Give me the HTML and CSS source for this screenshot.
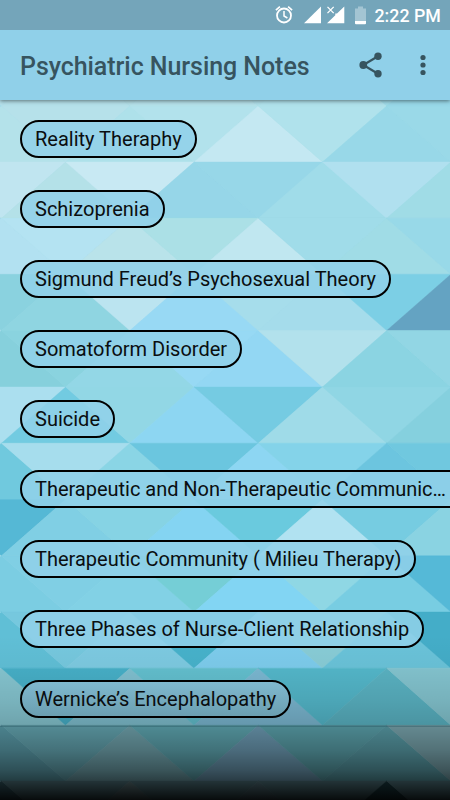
FILE: index.html
```
<!DOCTYPE html>
<html lang="en">
<head>
<meta charset="utf-8">
<title>Psychiatric Nursing Notes</title>
<link rel="stylesheet" href="styles.css">
</head>
<body>
<div class="screen">
  <svg class="backdrop" id="backdrop" viewBox="0 0 450 800" aria-hidden="true"></svg>
  <header class="top">
    <div class="status">
      <svg class="alarm" viewBox="0 0 18 20" fill="none" stroke="#fff"><circle cx="9" cy="10.5" r="7" stroke-width="1.8"/><path d="M9 6v5l3.4 2" stroke-width="1.5"/><path d="M.9 5.1 4.9 1.6M17.1 5.1l-4-3.5" stroke-width="1.7"/></svg>
      <svg class="signal" viewBox="0 0 17 18"><path d="M0 17.3 17 .6v16.7z" fill="#fff"/></svg>
      <svg class="signal nosim" viewBox="0 0 18 18"><path d="M0 17.3 8.3 9.2V7.6H10L17.3.6v16.7z" fill="#fff"/><path d="m.5.9 6.2 6.2M6.7.9.5 7.1" stroke="#fff" stroke-width="1.3"/></svg>
      <svg class="battery" viewBox="0 0 11 19"><path d="M3 .5h5v2h3V15H0V2.500h3z" fill="#a3c5d3"/><path d="M0 15h11v2.300q0 1-1 1H1q-1 0-1-1z" fill="#fff"/></svg>
      <span class="clock">2:22 PM</span>
    </div>
    <div class="bar">
      <h1 class="title">Psychiatric Nursing Notes</h1>
      <svg class="share" viewBox="0 0 24 26" fill="#37545f"><path d="M19 4.300 4.300 13 19 21.700" fill="none" stroke="#37545f" stroke-width="2.200"/><circle cx="19" cy="4.300" r="3.700"/><circle cx="4.300" cy="13" r="3.900"/><circle cx="19" cy="21.700" r="3.700"/></svg>
      <svg class="more" viewBox="0 0 6 22" fill="#37545f"><circle cx="3" cy="3.500" r="2.600"/><circle cx="3" cy="11" r="2.600"/><circle cx="3" cy="18.500" r="2.600"/></svg>
    </div>
  </header>
  <main class="topics">
    <a class="chip">Reality Theraphy</a>
    <a class="chip">Schizoprenia</a>
    <a class="chip">Sigmund Freud’s Psychosexual Theory</a>
    <a class="chip">Somatoform Disorder</a>
    <a class="chip">Suicide</a>
    <a class="chip cut">Therapeutic and Non-Therapeutic Communic…</a>
    <a class="chip">Therapeutic Community ( Milieu Therapy)</a>
    <a class="chip">Three Phases of Nurse-Client Relationship</a>
    <a class="chip shaded">Wernicke’s Encephalopathy</a>
  </main>
</div>
<script src="backdrop.js"></script>
</body>
</html>
```
FILE: styles.css
```
* { box-sizing: border-box; }
body { margin: 0; font-family: Roboto, "Liberation Sans", sans-serif; }
.screen {
  position: relative;
  isolation: isolate;
  width: 450px;
  height: 800px;
  overflow: hidden;
  background: #a4dcea;
}
.backdrop { position: absolute; inset: 0; z-index: -1; width: 450px; height: 800px; }
.top { box-shadow: 0 1px 4px rgba(0, 0, 0, .5); }
.status {
  display: flex;
  align-items: center;
  justify-content: flex-end;
  height: 30px;
  padding-right: 10px;
  background: #74a5ba;
}
.alarm { width: 18px; height: 20px; margin-right: 11px; }
.signal { width: 17px; height: 18px; margin-right: 6px; }
.nosim { width: 18px; margin-right: 10px; }
.battery { width: 11px; height: 19px; margin-right: 9px; }
.clock { width: 65.5px; font-size: 17.8px; font-weight: 500; line-height: 30px; color: #fff; white-space: nowrap; padding-top: 2px; }
.bar {
  display: flex;
  align-items: center;
  height: 70px;
  padding: 0 24.5px 0 20px;
  background: #90d0e9;
}
.title {
  flex: 1;
  margin: 0;
  font-size: 25px;
  letter-spacing: -.06px;
  font-weight: 500;
  line-height: 70px;
  color: #37545f;
  white-space: nowrap;
  padding-top: 3px;
}
.share { width: 24px; height: 26px; margin-right: 36.5px; }
.more { width: 6px; height: 22px; }
.topics {
  display: flex;
  flex-direction: column;
  align-items: flex-start;
  gap: 32px;
  padding: 20px 0 0 20px;
}
.chip {
  height: 38px;
  padding: 0 13px;
  border: 2px solid #000;
  border-radius: 19px;
  background: rgba(144, 208, 233, .86);
  font-size: 20px;
  line-height: 35px;
  color: #0a0e10;
  white-space: nowrap;
}
.cut { width: 460px; letter-spacing: -.02px; }
.shaded { background: linear-gradient(#80b9cf, #6b9fb1); }
```
FILE: backdrop.js
```
// Triangle mosaic: each row lists eight colours from left to right;
// "up" is the parity of the triangles that point upwards.
const rows = [
  [50, 106, 1, "b4e0ea b5e1ea b4e0e8 b5e1ea b0e0ea b0e2ec a0dbe9 98d8e8"],
  [106, 162, 0, "b4e2ea b6e1ea aee1ea b2e2ec c4e8f2 b0e2ec 98d8e8 9ad9e8"],
  [162, 218.300, 1, "c0e5f0 b4e1e8 c8e9f3 96d6e8 97d7e8 a0dce9 b0e0ef a0dce6"],
  [218.300, 274.300, 0, "b2e1f1 b4e3f2 b9e3ea abe0e6 c0e7f0 a0dce9 a0dce6 98d9e8"],
  [274.300, 330.600, 1, "8ad2df 8fd5e1 bbe4f0 98d9f4 a6ddeb a5dceb 7ccfe5 64a3c2"],
  [330.600, 387, 0, "86d0dc 8ad3df 93d7e6 97d9f4 93d7f3 b2e1ec 8bd4e2 92d6e4"],
  [387, 443.200, 1, "abdfef 72cbe1 92d7e5 8dd6f2 75cbe2 9fdbe8 90d6e4 85d0de"],
  [443.200, 499.500, 0, "70c9de a6dded 8ad5e5 6bc6df 8dd6f2 84d3e9 6cc5df 70c8df"],
  [499.500, 555.700, 1, "55b8d5 80cfe4 86d3e4 84d4f2 6acade b1e2f1 76cce1 8ad3e2"],
  [555.700, 612, 0, "7bcde2 80cfe4 82d1e5 75ced6 82d5f3 8fd7e4 78cde2 55b9d7"],
  [612, 668.200, 0, "60bfd6 76c8de 7dcae1 47b2cb 7dccec 88ccd6 6ac3d9 44adc8"],
  [668.200, 725.300, 0, "86c6d1 47b0c8 80c0d0 63c0cf 7bb8d2 54b8cb 5ab3c3 84c5d0"],
  [725.300, 781, 0, "5c9fad 66a9b5 73a8b2 60a9b4 6f9fb8 5ca4ae 5a9faa 7ba8b1"],
  [781, 837, 0, "3a6672 5f8c96 6e8e94 5f8c96 648a96 5f8c96 204a52 5f8c96"]
];
let shapes = "";
for (const [top, bottom, up, list] of rows) {
  list.split(" ").forEach((hex, k) => {
    const x = 1.500 + 64.200 * k;
    const apex = k % 2 === up ? top : bottom;
    const base = apex === top ? bottom : top;
    shapes += `<polygon points="${x},${apex} ${x - 64.200},${base} ${x + 64.200},${base}" fill="#${hex}" stroke="#${hex}" stroke-width=".4"/>`;
  });
}
const stops = [[0, 0], [.2, .03], [.4, .1], [.54, .17], [.7, .33], [.82, .5], [.88, .62], [1, .92]]
  .map(([at, alpha]) => `<stop offset="${at}" stop-opacity="${alpha}"/>`).join("");
document.getElementById("backdrop").innerHTML =
  `<defs><linearGradient id="fade" x1="0" y1="0" x2="0" y2="1">${stops}</linearGradient></defs>` +
  shapes +
  `<rect y="635" width="450" height="165" fill="url(#fade)"/>` +
  `<rect y="725.500" width="450" height="1.500" fill="#234c58" opacity=".35"/>`;
```
